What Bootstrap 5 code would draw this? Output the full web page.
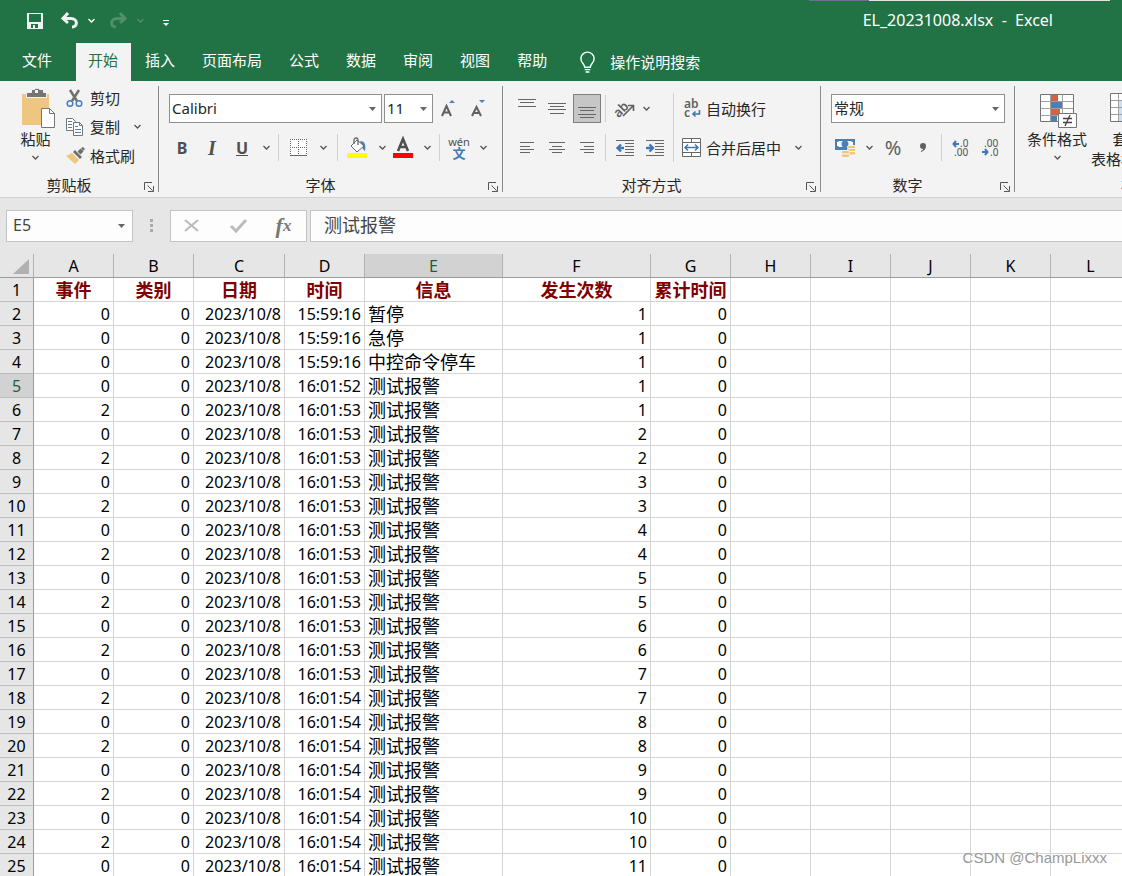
<!DOCTYPE html>
<html lang="zh-CN">
<head>
<meta charset="utf-8">
<meta name="viewport" content="width=device-width, initial-scale=1">
<title>EL_20231008.xlsx - Excel</title>
<link href="https://cdn.jsdelivr.net/npm/bootstrap@5.3.0/dist/css/bootstrap.min.css" rel="stylesheet">
<style>
body{font-family:"Noto Sans","Noto Sans CJK SC",sans-serif;font-size:15px;line-height:20px;color:#262626;background:#fff}
button{padding:0;border:0;background:none;color:inherit;font:inherit;white-space:nowrap}
svg{display:block;flex:none;overflow:visible}
/* title bar and tabs */
.titlebar{background:#217346;color:#fff;height:41px}
.qat{padding-left:27px}
.doc-title{margin-right:69px;white-space:pre;font-size:16px;padding-bottom:2px}
.edge-line{top:0;right:12px;width:241px;height:1px;background:#dde5e0}
.edge-line::before{content:"";position:absolute;right:100%;width:60px;height:1px;background:#6b7090}
.tabs{background:#217346;padding:2px 0 0 10px;gap:2px}
.tabs a{color:#fff;text-decoration:none;height:38px;line-height:34px;padding:0 13px 0 12px}
.tabs a.file-tab{margin-right:9px}
.tabs a.active{background:#f3f3f3;color:#217346}
.tell-me{color:#fff;margin-left:17px;gap:14px;height:38px}
/* ribbon */
.ribbon{background:#f3f3f3;padding:5px 0;border-bottom:1px solid #d2d2d2}
.rgroup{height:106px;border-right:1px solid #8a8a8a;flex:none}
.g-clip{width:159px}.g-font{width:344px}.g-align{width:318px}.g-num{width:194px}.g-style{width:263px}
.tools{height:92px}
.tools.two-rows{padding:8px 0 0 8px;gap:10px}
.g-align .two-rows,.g-num .two-rows{padding-left:9px}
.tool-row{height:29px}
.group-label{height:14px;line-height:14px}
.launcher{width:20px;padding:3px 0 0 6px}
.tb{width:30px;height:29px;display:flex;align-items:center;justify-content:center;flex:none}
.tb.on{width:28px;margin:0 1px;background:#c6c6c6;border:1px solid #7f7f7f}
.drop{width:18px;height:24px;display:flex;align-items:center;justify-content:center;flex:none}
.drop.tight{width:12px}
.vsep{width:1px;height:27px;background:#d0d0d0;margin:0 4px 0 3px;flex:none}
.vsep.tall{height:69px;margin-top:7px}
.combo{border:1px solid #8f8f8f;border-radius:0;height:29px;padding:0 18px 0 2px;font-size:15px;line-height:27px;color:#262626;background-color:#fff;background-size:7px 4px;background-position:right 5px center;background-image:url("data:image/svg+xml,%3Csvg xmlns='http://www.w3.org/2000/svg' viewBox='0 0 7 4'%3E%3Cpath fill='%23666' d='M0 0h7L3.500 4z'/%3E%3C/svg%3E")}
.w-fontname{width:213px;margin:0 2px}.w-size{width:49px}.w-number{width:174px;margin-left:1px}
.mini{gap:5px;padding-left:11px}
.mini button{height:24px;gap:6px}
.glyph{color:#505050;font-weight:700;font-size:16px}
.serif-i{font-family:"Liberation Serif",serif;font-size:20px}
.wen{font-size:11px;line-height:11px;color:#505050;text-align:center}
.wen b{color:#4078b5;font-size:13px;line-height:13px}
.wide-btn{gap:4px}
.pct{font-size:20px;color:#606060}
.style-tools{padding-left:12px}
/* formula bar */
.formula{background:#e6e6e6;padding:12px 0 12px 6px}
.formula .box,.formula .combo{height:32px;border:1px solid #c3c3c3;background-color:#fdfdfd}
.formula .name-box{width:127px;padding-left:6px;font-size:16px;color:#444;background-position:right 7px center}
.grip{width:37px}
.fx-box{width:137px}
.fx-box button{width:45px;height:30px}
.fx-glyph{font:italic 700 22px/24px "Liberation Serif",serif;color:#777}
.fx-glyph small{font-size:17px}
.fx-input{font-size:18px;color:#444;padding:0 13px 3px;border-radius:0;margin-left:3px;border-right-width:0!important;min-width:0;outline:0}
/* sheet */
.sheet{table-layout:fixed;width:1131px;border-collapse:separate;border-spacing:0;font-size:16px;line-height:21px;color:#000}
.sheet th,.sheet td{height:24px;padding:2px 3px 0;border:solid #d4d4d4;border-width:0 1px 1px 0;overflow:hidden;white-space:nowrap}
.sheet td{text-align:right}
.sheet td.txt,.sheet td.cap{font-size:18px;line-height:20px;padding-top:0;font-family:"Noto Sans CJK SC",sans-serif;text-align:left}
.sheet td.cap{text-align:center;font-weight:700;color:#800000;padding:0}
.sheet th{font-weight:400;text-align:center;background:#e6e6e6;border-color:#bdbdbd;padding:2px 0 0}
.sheet thead th{border-bottom-color:#9b9b9b;border-right-color:#b1b1b1}
.sheet tbody th{border-right-color:#9b9b9b}
.sheet th.sel{background:#d2d2d2;color:#1e5c3e}
.watermark{right:15px;bottom:8px;font:15px/20px "Liberation Sans",sans-serif;color:#999;text-shadow:1px 1px 0 #fff}
</style>
</head>
<body>
<div class="vh-100 d-flex flex-column overflow-hidden position-relative">
<header>
  <div class="titlebar d-flex align-items-center position-relative">
    <div class="qat d-flex align-items-center">
      <button aria-label="保存"><svg width="16" height="16"><path fill="#f3f3f3" fill-rule="evenodd" d="M0 0h16v16H0zM2 1v8h12V1zM4 11v4h2v-3h2v3h3v-4z"/></svg></button>
      <button aria-label="撤消" class="ms-3"><svg width="23" height="18" fill="none" stroke="#f3f3f3"><path d="M4 6.500h8c7 0 7 8.500 1 8.500" stroke-width="3"/><path d="M9 1L4 6.500l5 4.500" stroke-width="3"/></svg></button>
      <button aria-label="撤消选项" class="drop"><svg width="7" height="4" fill="none" stroke="#fff" stroke-width="1.300"><path d="M.5 0l3 3 3-3"/></svg></button>
      <button aria-label="恢复" class="ms-2" disabled><svg width="23" height="18" fill="none" stroke="#4f8f6b"><path d="M17 6.500H9c-7 0-7 8.500-1 8.500" stroke-width="3"/><path d="M12 1l5 5.500-5 4.500" stroke-width="3"/></svg></button>
      <button aria-label="恢复选项" class="drop" disabled><svg width="7" height="4" fill="none" stroke="#4f8f6b" stroke-width="1.300"><path d="M.5 0l3 3 3-3"/></svg></button>
      <button aria-label="自定义快速访问工具栏" class="drop ms-2"><svg width="6" height="6" class="mt-1" fill="#fff"><path d="M0 0h6v1H0zM0 3h6L3 6z"/></svg></button>
    </div>
    <div class="doc-title ms-auto">EL_20231008.xlsx  -  Excel</div>
    <div class="edge-line position-absolute"></div>
  </div>
  <nav class="tabs d-flex align-items-start">
    <a href="#" class="file-tab">文件</a><a href="#" class="active">开始</a><a href="#">插入</a><a href="#">页面布局</a><a href="#">公式</a><a href="#">数据</a><a href="#">审阅</a><a href="#">视图</a><a href="#">帮助</a>
    <button class="tell-me d-flex align-items-center"><svg width="17" height="21" viewBox="0 0 18 22" fill="none" stroke="#fff" stroke-width="1.500"><path d="M6 16c0-4-4-4-4-9a7 7 0 0 1 14 0c0 5-4 5-4 9zM6 18.500h6M7 21h4"/></svg>操作说明搜索</button>
  </nav>
</header>

<section class="ribbon d-flex overflow-hidden">
  <div class="rgroup g-clip">
    <div class="tools d-flex">
      <button class="d-flex flex-column align-items-center ms-3">
        <svg width="39" height="43" class="ps-1"><path fill="#eec67f" d="M2 8h27v31H2z"/><path fill="#757575" stroke="#f3f3f3" d="M6.500 6.500h5v-3h3a3 3 0 0 1 5 0h4v3h3v5h-20z"/><path fill="#f3f3f3" d="M15 4h3v3h-3z"/><path fill="#fff" stroke="#757575" d="M21.500 22.500h8l5 5v14h-13z"/><path fill="none" stroke="#757575" d="M29.500 22.500v5h5"/></svg>
        <span>粘贴</span>
        <svg class="mt-1" width="7" height="9" fill="none" stroke="#555" stroke-width="1.300"><path d="M.5 3l3 3 3-3"/></svg>
      </button>
      <div class="mini d-flex flex-column align-items-start">
        <button class="d-flex align-items-center"><svg width="18" height="20" fill="none"><path stroke="#707070" stroke-width="2.500" d="M4 2l7 11M13 2L6 13"/><circle cx="4" cy="15.500" r="2.800" stroke="#4a7fb8" stroke-width="1.500"/><circle cx="13" cy="15.500" r="2.800" stroke="#4a7fb8" stroke-width="1.500"/></svg>剪切</button>
        <div class="d-flex"><button class="d-flex align-items-center"><svg width="18" height="20" fill="#fff" stroke="#757575"><path d="M.5 1.500h6l3 3v9h-9z"/><path d="M7.500 5.500h6l3 3v10h-9z"/><path fill="none" d="M13.500 5.500v3h3"/><path stroke="#4a7fb8" d="M2 4.500h4M2 7.500h4M2 10.500h4M9 9.500h3M9 12.500h6M9 15.500h6"/></svg>复制</button><button class="drop ms-2" aria-label="复制选项"><svg width="7" height="4" fill="none" stroke="#555" stroke-width="1.300"><path d="M.5 0l3 3 3-3"/></svg></button></div>
        <button class="d-flex align-items-center"><svg width="18" height="18"><path fill="#eec67f" d="M0 9l6-3 7 7-4 4z"/><path fill="#707070" d="M7 5l2-2 7 7-2 2zM11.500 4.500l3-3 3 3-3 3zM15 1l2-1 2 2-2 2z"/></svg>格式刷</button>
      </div>
    </div>
    <div class="group-label d-flex"><span class="flex-fill text-center">剪贴板</span><button class="launcher" aria-label="剪贴板设置"><svg width="10" height="10" fill="none" stroke="#555"><path d="M.5 8V.5H8M3.500 3.500l5 5M9.500 4v5.500H4"/></svg></button></div>
  </div>

  <div class="rgroup g-font">
    <div class="tools two-rows d-flex flex-column">
      <div class="tool-row d-flex">
        <select class="form-select combo w-fontname" aria-label="字体"><option>Calibri</option></select>
        <select class="form-select combo w-size" aria-label="字号"><option>11</option></select>
        <button class="tb" aria-label="增大字号"><svg width="14" height="20"><path d="M1 17L5.500 7 10 17M2.500 13.500h6" fill="none" stroke="#606060" stroke-width="2"/><path d="M8 4h6l-3-3z" fill="#4a7fb8"/></svg></button>
        <button class="tb" aria-label="减小字号"><svg width="14" height="20"><path d="M1 17L5.500 8 10 17M2.500 14h6" fill="none" stroke="#606060" stroke-width="2"/><path d="M8 1h6l-3 3z" fill="#4a7fb8"/></svg></button>
      </div>
      <div class="tool-row d-flex align-items-center">
        <button class="tb glyph">B</button><button class="tb glyph fst-italic serif-i">I</button><button class="tb glyph text-decoration-underline">U</button>
        <button class="drop" aria-label="下划线选项"><svg width="7" height="4" fill="none" stroke="#555" stroke-width="1.300"><path d="M.5 0l3 3 3-3"/></svg></button>
        <span class="vsep"></span>
        <button class="tb" aria-label="边框"><svg width="17" height="17" fill="none" stroke="#666"><path fill="#fff" stroke="none" d="M0 0h17v17H0z"/><path stroke-dasharray="1 1" d="M0 .5h17M.5 0v16M8.500 0v16M16.500 0v16M0 8.500h17"/><path d="M0 16.500h17"/></svg></button>
        <button class="drop tight ms-1" aria-label="边框选项"><svg width="7" height="4" fill="none" stroke="#555" stroke-width="1.300"><path d="M.5 0l3 3 3-3"/></svg></button>
        <span class="vsep ms-2"></span>
        <button class="tb" aria-label="填充颜色"><svg width="20" height="21"><path d="M13 4c5 0 6 4 5 10-2-1-3-4-4-7z" fill="#4a7fb8"/><path d="M10 3l7 6-7 6-6-6z" fill="#fff" stroke="#666"/><path d="M7 7V3a2 2 0 0 1 4 0v5" fill="none" stroke="#666" stroke-width="1.300"/><path fill="#ff0" d="M0 16h20v5H0z"/></svg></button>
        <button class="drop tight ms-1" aria-label="填充选项"><svg width="7" height="4" fill="none" stroke="#555" stroke-width="1.300"><path d="M.5 0l3 3 3-3"/></svg></button>
        <button class="tb" aria-label="字体颜色"><svg width="20" height="21"><path d="M5 14L10 2l5 12M7 10h6" fill="none" stroke="#505050" stroke-width="2.600"/><path fill="red" d="M0 16h20v5H0z"/></svg></button>
        <button class="drop" aria-label="字体颜色选项"><svg width="7" height="4" fill="none" stroke="#555" stroke-width="1.300"><path d="M.5 0l3 3 3-3"/></svg></button>
        <span class="vsep"></span>
        <button class="tb wen"><span>wén<br><b>文</b></span></button>
        <button class="drop" aria-label="拼音选项"><svg width="7" height="4" fill="none" stroke="#555" stroke-width="1.300"><path d="M.5 0l3 3 3-3"/></svg></button>
      </div>
    </div>
    <div class="group-label d-flex"><span class="flex-fill text-center">字体</span><button class="launcher" aria-label="字体设置"><svg width="10" height="10" fill="none" stroke="#555"><path d="M.5 8V.5H8M3.500 3.500l5 5M9.500 4v5.500H4"/></svg></button></div>
  </div>

  <div class="rgroup g-align">
    <div class="tools d-flex">
      <div class="tools two-rows d-flex flex-column">
        <div class="tool-row d-flex align-items-center">
          <button class="tb" aria-label="顶端对齐"><svg width="18" height="21" stroke="#666"><path d="M0 1.500h18M2 4.500h14M0 8.500h18"/></svg></button>
          <button class="tb" aria-label="垂直居中"><svg width="18" height="21" stroke="#666"><path d="M0 5.500h18M2 8.500h14M0 11.500h18M2 15.500h14"/></svg></button>
          <button class="tb on" aria-label="底端对齐"><svg width="18" height="21" stroke="#666"><path d="M0 9.500h18M2 12.500h14M0 16.500h18M2 19.500h14"/></svg></button>
          <span class="vsep"></span>
          <button class="tb" aria-label="方向"><svg width="20" height="20"><text x="-2" y="14" transform="rotate(-45 7 10)" font-size="13" font-weight="600" fill="#606060">ab</text><path d="M8 17L18 7M13 6.500h5.500V12" fill="none" stroke="#606060" stroke-width="1.600"/></svg></button>
          <button class="drop tight" aria-label="方向选项"><svg width="7" height="4" fill="none" stroke="#555" stroke-width="1.300"><path d="M.5 0l3 3 3-3"/></svg></button>
        </div>
        <div class="tool-row d-flex align-items-center">
          <button class="tb" aria-label="左对齐"><svg width="14" height="11" stroke="#666"><path d="M0 .5h14M0 4.500h10M0 7.500h14M0 10.500h10"/></svg></button>
          <button class="tb" aria-label="居中"><svg width="16" height="11" stroke="#666"><path d="M0 .5h16M3 4.500h10M0 7.500h16M3 10.500h10"/></svg></button>
          <button class="tb" aria-label="右对齐"><svg width="14" height="11" stroke="#666"><path d="M0 .5h14M4 4.500h10M0 7.500h14M4 10.500h10"/></svg></button>
          <span class="vsep"></span>
          <button class="tb" aria-label="减少缩进"><svg width="18" height="16" fill="none" stroke="#666"><path d="M0 .5h18M9 3.500h9M9 6.500h9M9 9.500h9M9 12.500h9M0 15.500h18"/><path d="M8 8H2M5 4.500L1.500 8 5 11.500" stroke="#4078b5" stroke-width="2.400"/></svg></button>
          <button class="tb" aria-label="增加缩进"><svg width="18" height="16" fill="none" stroke="#666"><path d="M0 .5h18M9 3.500h9M9 6.500h9M9 9.500h9M9 12.500h9M0 15.500h18"/><path d="M0 8h6M3.500 4.500L7 8l-3.500 3.500" stroke="#4078b5" stroke-width="2.400"/></svg></button>
        </div>
      </div>
      <span class="vsep tall"></span>
      <div class="two-rows tools d-flex flex-column ps-1">
        <button class="tool-row wide-btn d-flex align-items-center"><svg width="20" height="20" font-size="12" font-weight="600" fill="#606060"><text x="2" y="9">ab</text><text x="2" y="18">c</text><path d="M17.500 11v4H11M13.500 12.500L11 15l2.500 2.500" fill="none" stroke="#4078b5" stroke-width="1.600"/></svg>自动换行</button>
        <div class="d-flex align-items-center"><button class="tool-row wide-btn d-flex align-items-center"><svg width="20" height="19" fill="none" stroke="#666"><path fill="#fff" d="M.5 .5h18v18H.5z"/><path d="M0 4.500h19M0 14.500h19M9.500 0v4M9.500 15v4"/><path d="M3 9.500h13M6 6.500l-3 3 3 3M13 6.500l3 3-3 3" stroke="#4078b5" stroke-width="1.500"/></svg>合并后居中</button><button class="drop ms-2" aria-label="合并选项"><svg width="7" height="4" fill="none" stroke="#555" stroke-width="1.300"><path d="M.5 0l3 3 3-3"/></svg></button></div>
      </div>
    </div>
    <div class="group-label d-flex"><span class="flex-fill text-center">对齐方式</span><button class="launcher" aria-label="对齐设置"><svg width="10" height="10" fill="none" stroke="#555"><path d="M.5 8V.5H8M3.500 3.500l5 5M9.500 4v5.500H4"/></svg></button></div>
  </div>

  <div class="rgroup g-num">
    <div class="tools two-rows d-flex flex-column">
      <div class="tool-row"><select class="form-select combo w-number" aria-label="数字格式"><option>常规</option></select></div>
      <div class="tool-row d-flex align-items-center">
        <button class="tb" aria-label="会计数字格式"><svg width="20" height="20"><path fill="#4a7fb8" d="M0 1h20v11H0z"/><path fill="#fff" d="M2 4a2 2 0 0 0 2-1h12a2 2 0 0 0 2 1v4a2 2 0 0 0-2 1H4a2 2 0 0 0-2-1z"/><circle cx="10" cy="6" r="3.500" fill="#4a7fb8"/><g fill="#eec67f" stroke="#f3f3f3"><rect x="12.500" y="7.500" width="8" height="3.500" rx="1.500"/><rect x="12.500" y="10.500" width="8" height="3.500" rx="1.500"/><rect x="12.500" y="13.500" width="8" height="3.500" rx="1.500"/><rect x="6.500" y="12.500" width="8" height="3.500" rx="1.500"/><rect x="6.500" y="16" width="8" height="3.500" rx="1.500"/></g></svg></button>
        <button class="drop" aria-label="会计格式选项"><svg width="7" height="4" fill="none" stroke="#555" stroke-width="1.300"><path d="M.5 0l3 3 3-3"/></svg></button>
        <button class="tb pct">%</button>
        <button class="tb" aria-label="千位分隔样式"><svg width="8" height="12"><path fill="#606060" d="M4 1a3 3 0 0 1 3 3c0 3-2 5-5 6V9c1-.5 2-1 2-2a3 3 0 0 1 0-6z"/></svg></button>
        <span class="vsep"></span>
        <button class="tb" aria-label="增加小数位数"><svg width="18" height="20" fill="#505050" font-size="10"><text x="8" y="9">.0</text><text x="2" y="18">.00</text><path d="M7 6H2M4 3L1.500 6 4 9" fill="none" stroke="#4078b5" stroke-width="2"/></svg></button>
        <button class="tb" aria-label="减少小数位数"><svg width="18" height="20" fill="#505050" font-size="10"><text x="2" y="9">.00</text><text x="8" y="18">.0</text><path d="M0 14h5M3 11l2.500 3L3 17" fill="none" stroke="#4078b5" stroke-width="2"/></svg></button>
      </div>
    </div>
    <div class="group-label d-flex"><span class="flex-fill text-center">数字</span><button class="launcher" aria-label="数字设置"><svg width="10" height="10" fill="none" stroke="#555"><path d="M.5 8V.5H8M3.500 3.500l5 5M9.500 4v5.500H4"/></svg></button></div>
  </div>

  <div class="rgroup g-style">
    <div class="tools d-flex style-tools">
      <button class="d-flex flex-column align-items-center">
        <svg width="34" height="43"><path fill="#fff" stroke="#757575" d="M.5 8.500h33v27H.5z"/><path fill="#d8603e" d="M11 9h7v6h-7zM11 23h9v6h-9z"/><path fill="#4a7fb8" d="M11 16h11v6H11zM11 30h6v5h-6z"/><path stroke="#a0a0a0" d="M10.500 9v26M22.500 9v26M1 15.500h32M1 22.500h32M1 29.500h32"/><path fill="#fff" stroke="#757575" d="M18.500 27.500h18v14h-18z"/><path fill="none" stroke="#444" stroke-width="1.300" d="M23 32.500h9M23 36.500h9M30 29l-5 11"/></svg>
        <span>条件格式</span><svg class="mt-1" width="7" height="9" fill="none" stroke="#555" stroke-width="1.300"><path d="M.5 3l3 3 3-3"/></svg>
      </button>
      <button class="d-flex flex-column align-items-center ms-1">
        <svg width="34" height="43"><path fill="#fff" stroke="#757575" d="M.5 7.500h33v28H.5z"/><path fill="#cfdfee" d="M9 14h24v21H9z"/><path stroke="#a0a0a0" d="M8.500 8v27M20.500 8v27M1 14.500h32M1 21.500h32M1 28.500h32"/></svg>
        <span>套用</span><span>表格格式 <svg class="d-inline" width="9" height="9" fill="none" stroke="#555" stroke-width="1.300"><path d="M.5 2l3 3 3-3"/></svg></span>
      </button>
    </div>
    <div class="group-label d-flex"><span class="flex-fill text-center">样式</span><span class="launcher"></span></div>
  </div>
</section>

<section class="formula d-flex">
  <select class="form-select combo name-box" aria-label="名称框"><option>E5</option></select>
  <div class="grip d-flex align-items-center justify-content-center"><svg width="3" height="13" fill="#aaa"><path d="M0 0h3v3H0zM0 5h3v3H0zM0 10h3v3H0z"/></svg></div>
  <div class="box fx-box d-flex">
    <button class="tb pe-1" aria-label="取消"><svg width="15" height="13" fill="none" stroke="#bcbcbc" stroke-width="2.200"><path d="M1 1l13 11M14 1L1 12"/></svg></button>
    <button class="tb" aria-label="输入"><svg width="17" height="14" fill="none" stroke="#bcbcbc" stroke-width="3"><path d="M1 7l5 5L16 1"/></svg></button>
    <button class="tb fx-glyph">f<small>x</small></button>
  </div>
  <input class="box fx-input flex-fill" type="text" value="测试报警" aria-label="编辑栏">
</section>

<main class="overflow-hidden">
  <table class="sheet">
    <colgroup id="cols"></colgroup>
    <thead><tr id="heads"></tr></thead>
    <tbody id="rows"></tbody>
  </table>
</main>
<div class="watermark position-absolute">CSDN @ChampLixxx</div>
</div>
<script src="https://cdn.jsdelivr.net/npm/bootstrap@5.3.0/dist/js/bootstrap.bundle.min.js"></script>
<script>
const widths = [34, 80, 80, 91, 80, 138, 148, 80, 80, 80, 80, 80, 80];
document.getElementById('cols').innerHTML = widths.map(w => `<col style="width:${w}px">`).join('');
const corner = '<th aria-label="全选"><svg class="ms-auto me-1" width="16" height="15"><path fill="#b1b1b1" d="M16 0v15H0z"/></svg></th>';
document.getElementById('heads').innerHTML = corner + [...'ABCDEFGHIJKL'].map(c => `<th class="${c === 'E' ? 'sel' : ''}">${c}</th>`).join('');
const blank = '<td></td>'.repeat(5);
const caps = ['事件', '类别', '日期', '时间', '信息', '发生次数', '累计时间'];
let html = '<tr><th>1</th>' + caps.map(c => `<td class="cap">${c}</td>`).join('') + blank + '</tr>';
const first = ['暂停', '急停', '中控命令停车'];
for (let r = 2; r <= 25; r++) {
  const event = r > 5 && r % 2 === 0 ? 2 : 0;
  const time = r < 5 ? '15:59:16' : r === 5 ? '16:01:52' : r < 18 ? '16:01:53' : '16:01:54';
  const count = r < 5 ? 1 : Math.floor((r - 3) / 2);
  html += `<tr><th class="${r === 5 ? 'sel' : ''}">${r}</th><td>${event}</td><td>0</td><td>2023/10/8</td><td>${time}</td><td class="txt">${first[r - 2] || '测试报警'}</td><td>${count}</td><td>0</td>${blank}</tr>`;
}
document.getElementById('rows').innerHTML = html;
</script>
</body>
</html>
